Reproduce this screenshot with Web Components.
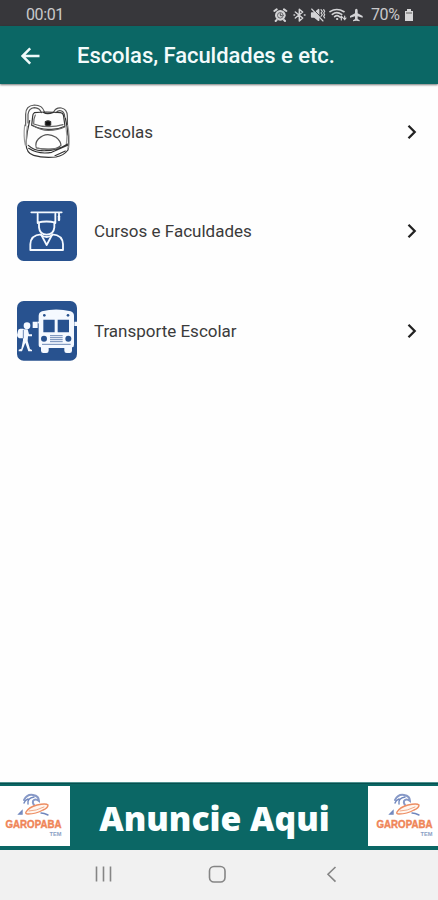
<!DOCTYPE html>
<html lang="pt-BR">
<head>
<meta charset="utf-8">
<title>Escolas, Faculdades e etc.</title>
<style>
html,body{margin:0;height:100%;background:#fefefe}
body{font-family:Roboto,"Liberation Sans",sans-serif;overflow:hidden}
</style>
</head>
<body>
<app-screen></app-screen>
<script>
const define = (name, html) => {
  const t = document.createElement('template');
  t.innerHTML = html;
  customElements.define(name, class extends HTMLElement {
    constructor() {
      super();
      this.attachShadow({mode: 'open'}).append(t.content.cloneNode(true));
    }
  });
};

define('status-bar', `<style>
:host{display:flex;align-items:center;justify-content:space-between;height:26px;flex:none;box-sizing:border-box;padding:3px 24px 0 26px;background:#37373b;color:#c9c9cb;font-size:16px;line-height:22px}
.time{letter-spacing:-.4px}
.right{display:flex;align-items:center}
.pct{width:30px;margin-left:7px;letter-spacing:-.4px;white-space:nowrap}
svg{display:block}.batt{margin-left:3px}
</style>
<span class="time">00:01</span>
<div class="right">
<svg width="91" height="16" viewBox="38 18 273 48" fill="none" stroke="#d4d4d6" stroke-width="4.500" stroke-linecap="round" stroke-linejoin="round">
<circle cx="60" cy="43" r="16" fill="#d4d4d6" stroke="none"/><path d="M42 30l7-5M78 30l-7-5M49 57l-3 3M71 57l3 3" stroke-width="6"/><circle cx="60" cy="43" r="8.500" stroke="#55555a" stroke-width="2.500"/><path d="M60 38v6h4" stroke="#37373b" stroke-width="2.500"/>
<path d="M105 33l22 18-10 9V25l10 8-22 18M101 42h2M132 42h2"/>
<path d="M154 36h8l13-10v32l-13-10h-8z" fill="#d4d4d6"/><path d="M157 23l34 35" stroke="#37373b" stroke-width="3"/><path d="M154 24l34 36" stroke-width="3.500"/><path d="M182 26l4 5-4 5 4 5-4 5M190 26l3 5-3 5 3 5-3 5 3 5" stroke-width="3.500"/>
<path d="M209 32q20-13 42 0M216 40q13-10 28 0M223 47q7-6 14 0" stroke-width="5"/><path d="M230 54h1" stroke-width="6"/><path d="M243 46v11M239 50l4-5 4 5M253 45v11M249 51l4 5 4-5" stroke-width="3.500"/>
<path d="M288 23q4 0 4 6v8l15 8v5l-15-4v8l6 4v3l-10-2-10 2v-3l6-4v-8l-15 4v-5l15-8v-8q0-6 4-6z" fill="#d4d4d6" stroke="none"/>
</svg>
<span class="pct">70%</span>
<svg class="batt" width="10" height="14" viewBox="0 0 10 14" fill="#d6d6d8"><path d="M3 1h4v2h2v10H1V3h2z"/><path d="M2 4h6v2H2z" fill="#999"/></svg>
</div>`);

define('app-bar', `<style>
:host{display:flex;align-items:center;height:58px;flex:none;box-sizing:border-box;padding:1px 20px 0 21px;background:#0b6765;color:#f3fbfb;box-shadow:0 1px 2px #0008;position:relative}
svg{display:block;flex:none;width:19px;height:18px;margin-right:37px}
h1{margin:0;font-size:22px;line-height:28px;font-weight:500;letter-spacing:-.05px;white-space:nowrap}
</style>
<svg viewBox="0 0 19 18" fill="none" stroke="#eefafa" stroke-width="2.500"><path d="M18.500 9H2M9.200 1.300L1.500 9l7.700 7.700"/></svg>
<h1><slot></slot></h1>`);

define('list-row', `<style>
:host{display:flex;align-items:center;height:60px}
.icon{width:60px;height:60px;flex:none}
.label{flex:1;margin-left:16.500px;font-size:17px;line-height:24px;color:#3b3b3b;white-space:nowrap}
svg{display:block;flex:none}
</style>
<div class="icon"><slot name="icon"></slot></div>
<span class="label"><slot></slot></span>
<svg width="10" height="16" viewBox="0 0 10 16" fill="none" stroke="#222" stroke-width="2.300"><path d="M1.500 1.800L7.700 8l-6.200 6.200"/></svg>`);

define('icon-bag', `<style>:host,svg{display:block;width:60px;height:60px}</style>
<svg viewBox="22 21 180 180" fill="none" stroke="#333" stroke-width="3.500" stroke-linecap="round" stroke-linejoin="round">
<path d="M48 92V58q0-26 26-28 24 0 30 20M55 84V58q2-18 19-20 17 1 21 15" stroke="#555"/>
<path d="M132 51q7-14 23-12 17 3 18 23l1 58M139 53q8-9 17-5 9 5 9 18" stroke="#555"/>
<path d="M74 53q35-4 78 0 9 1 10 12l4 29q-23 11-48 9-26 1-52-12l3-27q0-8 5-11z"/>
<path d="M77 60q-6 12-5 27 20 8 46 8 22 0 42-6M71 92q22 14 46 14 27 0 48-10" stroke="#666"/>
<path d="M102 52q10 7 29 0" stroke-width="4"/>
<path d="M107 80q8-5 16 0v10q-8 3-16 0z" fill="#111"/>
<path d="M60 77q-9 35-11 69 1 29 23 35 29 9 67 5 23-4 36-21 6-35-8-96"/>
<path d="M45 90q-4 36 2 60M53 94q-5 32-2 57M174 91q7 29 3 67M169 97q5 26 1 54" stroke="#999"/>
<path d="M80 159q-5-15 6-27 24-24 53-5 14 11 15 24-13 12-36 11-21 0-38-3z" stroke="#555"/>
<path d="M56 151q16 15 39 16 28 2 58-9l21-11M57 160q29 19 69 12l48-21M136 182l31-14" stroke-width="3.500"/>
<path d="M83 159q27 9 63 0" stroke="#777"/>
</svg>`);

define('icon-graduate', `<style>:host,svg{display:block;width:60px;height:60px}</style>
<svg viewBox="22 18 180 180" fill="none" stroke="#f4f9ff" stroke-width="5.500" stroke-linejoin="round" stroke-linecap="round">
<rect x="22" y="18" width="180" height="180" rx="20" fill="#28528f" stroke="none"/>
<path d="M65 52h91M84 57v27M137 57v27M84 83q27-7 53 0M148 53v21"/>
<path d="M148 64v11" stroke-width="7"/>
<path d="M88 85v12q2 21 23 22 21-1 23-22V85"/>
<path d="M94 118q-31 2-32 30v17h98v-17q-1-28-32-30M94 118l17 32 17-32"/>
<path d="M95 121q16 10 32 0"/>
</svg>`);

define('icon-bus', `<style>:host,svg{display:block;width:60px;height:60px}</style>
<svg viewBox="22 22 180 180" fill="#f5f9ff">
<rect x="22" y="22" width="180" height="179" rx="20" fill="#28528f"/>
<path d="M87 153V66q1-10 10-13 42-11 86 0 10 4 10 13v87q0 8-6 8v10q0 7-7 7h-9q-7 0-7-7v-8h-47v8q0 7-7 7h-9q-7 0-7-7v-10q-7 0-7-8z"/>
<path d="M69 84h15v19H69zM194 84h8v13h-8z"/><path d="M84 84h5v5h-5z"/>
<g fill="#28528f"><path d="M101 78h34v38h-34zM144 78h34v38h-34z"/><circle cx="104" cy="65" r="4"/><circle cx="175" cy="65" r="4"/><circle cx="103" cy="135" r="9"/><circle cx="176" cy="135" r="9"/></g>
<path d="M121 126h38M121 132h38M121 138h38M121 144h38M97 152h86" stroke="#28528f" stroke-width="2" fill="none"/>
<circle cx="52" cy="96" r="10"/>
<path d="M25 111q1-6 7-6h9v29H29q-7-2-7-10zM41 107h13l4 15h9v6H55l-1 14 7 24 6 3v4H56l-9-26-10 26H27v-5l8-3 5-25z"/>
<path d="M41 109v25" stroke="#28528f" stroke-width="2"/>
</svg>`);

define('surf-logo', `<style>
:host{display:block;width:70px;height:60px;background:#fff;flex:none}
svg{display:block;margin-left:var(--shift,0)}
text{font-family:"Liberation Sans",sans-serif;font-weight:700}
</style>
<svg width="66" height="60" viewBox="0 0 66 60" fill="none" stroke-linecap="round">
<path d="M24 14q3-6 9-5 6 1 6 6-4-3-6 0-1 3 4 7" stroke="#8799c7" stroke-width="2"/>
<path d="M28 18q-1-6 6-7M24 17q1-3 4-4M19 28l3-3v3zM41 27q3 0 7 2" stroke="#6f86bd" stroke-width="1.400"/>
<path d="M26 26q3-5 11-7 9-2 11 0 0 3-5 5-7 4-15 4-3 0-2-2z" fill="#fff6ef" stroke="#ed8d62" stroke-width="1.400"/>
<path d="M29 25q7 0 15-4" stroke="#ed946c" stroke-width=".8"/>
<text x="5.500" y="42" font-size="10" fill="#ef8558" stroke="#ef8558" stroke-width=".4" textLength="56" lengthAdjust="spacingAndGlyphs">GAROPABA</text>
<text x="49.500" y="49.500" font-size="5" fill="#8b9fc4" textLength="12" lengthAdjust="spacingAndGlyphs">TEM</text>
</svg>`);

define('ad-banner', `<style>
:host{display:flex;align-items:center;justify-content:space-between;height:68px;flex:none;box-sizing:border-box;background:#0b6765;border-top:1px solid #4f9190;padding-bottom:1px;box-shadow:inset 0 1px 0 #07504f}
strong{flex:1;padding-right:9px;text-align:center;font:800 33.700px/50px "Open Sans","Liberation Sans",sans-serif;color:#fbffff;white-space:nowrap;padding-top:3px}
.end{--shift:2.500px}
</style>
<surf-logo></surf-logo><strong><slot></slot></strong><surf-logo class="end"></surf-logo>`);

define('nav-bar', `<style>
:host{display:block;height:50px;flex:none;background:#f1f1f1}
svg{display:block}
</style>
<svg width="438" height="50" viewBox="0 0 438 50" fill="none" stroke="#858585" stroke-width="1.600">
<path d="M96.500 16.500v15M103.500 16.500v15M110.500 16.500v15"/>
<rect x="209.500" y="16.500" width="15.500" height="15.500" rx="4.500"/>
<path d="M335.500 17l-7.500 7.300 7.500 7.300"/>
</svg>`);

define('app-screen', `<style>
:host{display:flex;flex-direction:column;width:438px;height:900px;background:#fefefe}
main{flex:1;display:flex;flex-direction:column;gap:39.400px;padding:18px 21.500px 0 17.400px}
</style>
<status-bar></status-bar>
<app-bar>Escolas, Faculdades e etc.</app-bar>
<main>
<list-row><icon-bag slot="icon"></icon-bag>Escolas</list-row>
<list-row><icon-graduate slot="icon"></icon-graduate>Cursos e Faculdades</list-row>
<list-row><icon-bus slot="icon"></icon-bus>Transporte Escolar</list-row>
</main>
<ad-banner>Anuncie Aqui</ad-banner>
<nav-bar></nav-bar>`);
</script>
</body>
</html>
